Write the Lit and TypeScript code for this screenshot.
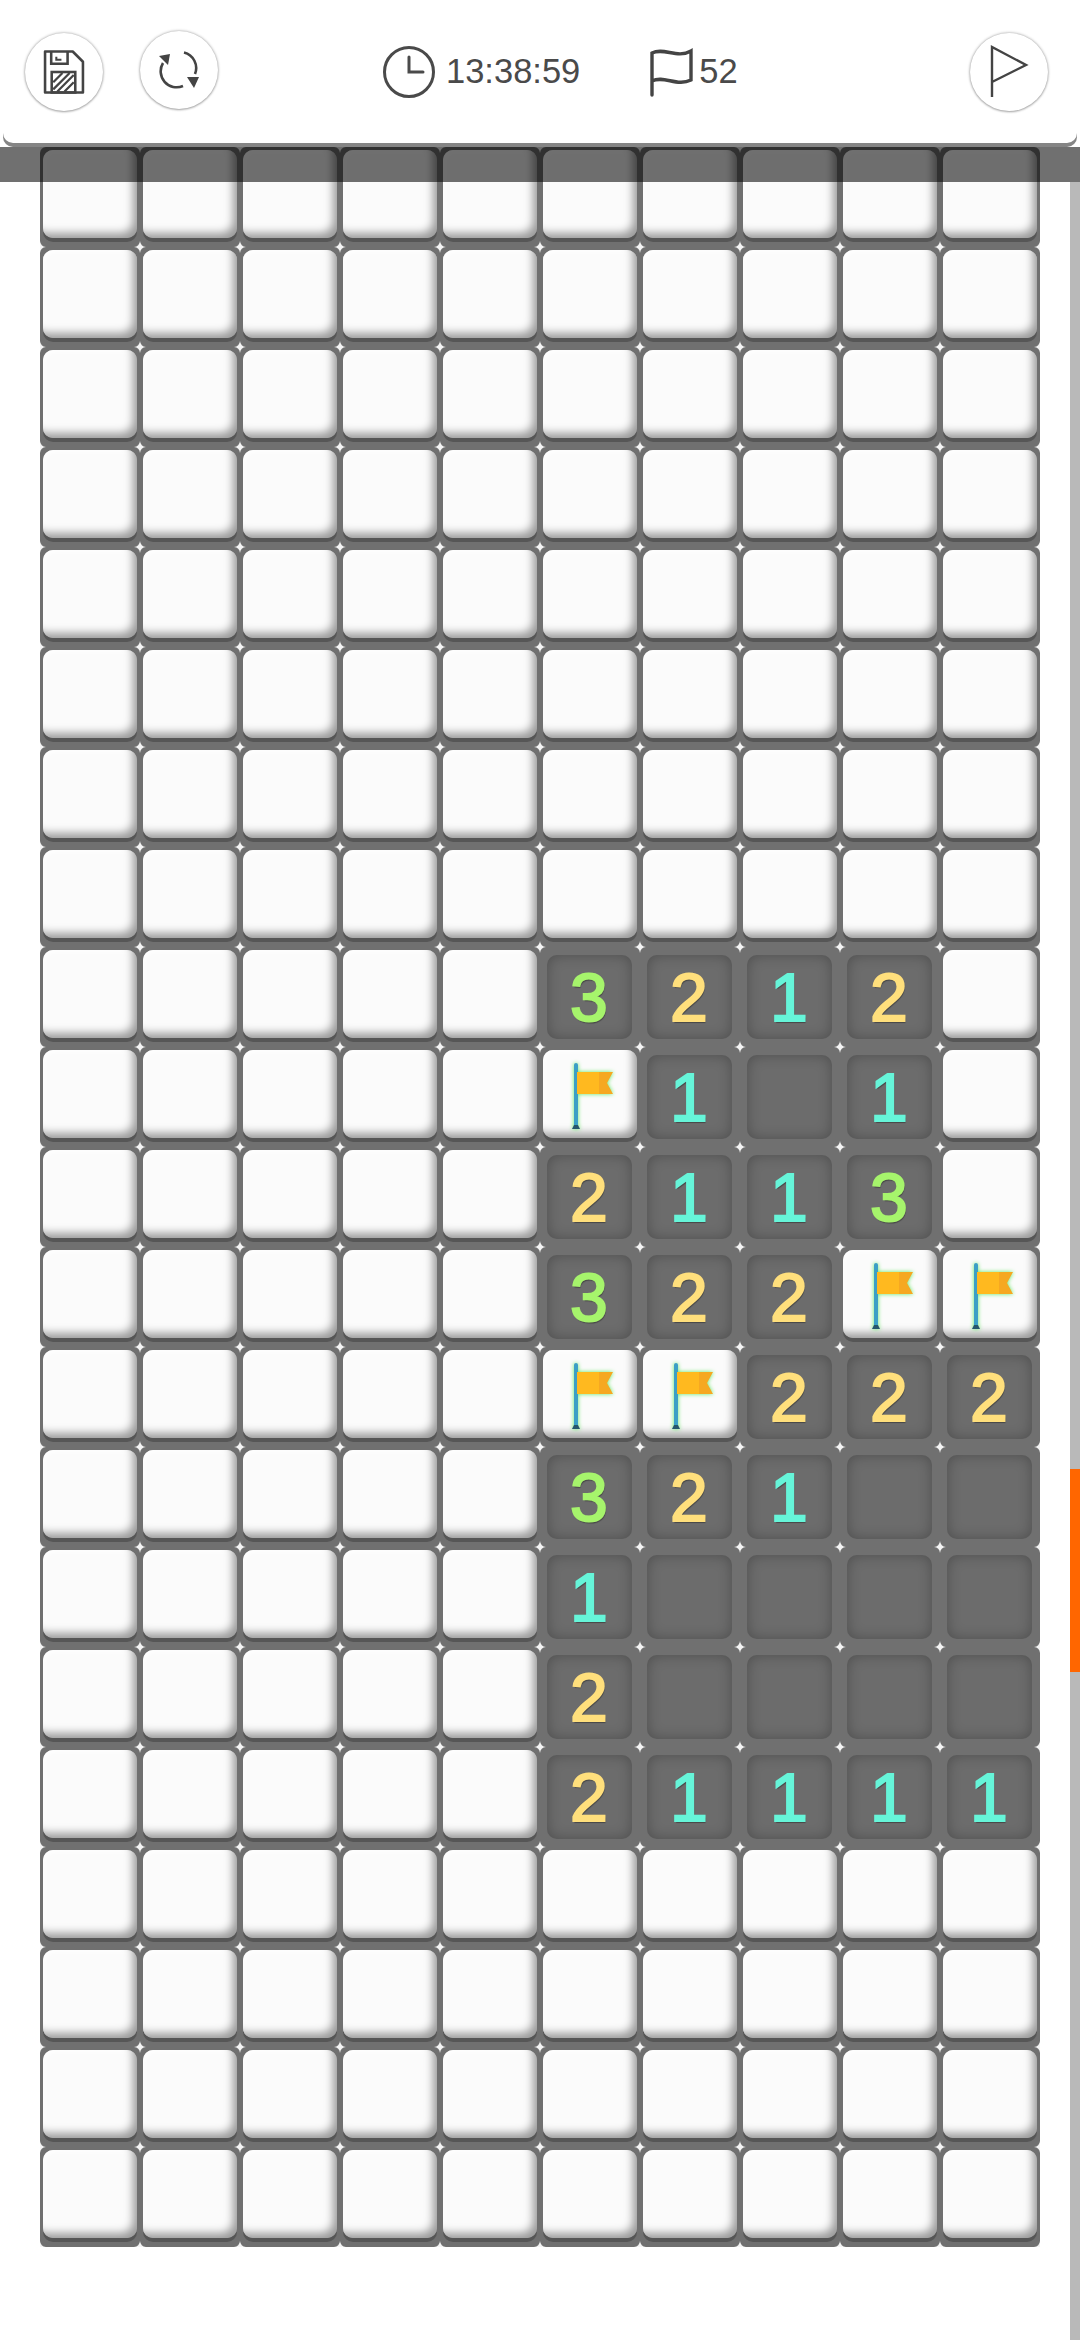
import { LitElement, css, html, svg } from 'lit';
import { customElement } from 'lit/decorators.js';

// '#' covered, 'F' flagged, '.' opened and empty, digit opened with count
const COVERED = '##########';
const BOARD = [
  ...Array(8).fill(COVERED),
  '#####3212#',
  '#####F1.1#',
  '#####2113#',
  '#####322FF',
  '#####FF222',
  '#####321..',
  '#####1....',
  '#####2....',
  '#####21111',
  ...Array(4).fill(COVERED),
];

const STAR = (x: number, y: number) =>
  `M${x} ${y - 6}Q${x + 0.6} ${y - 0.6} ${x + 6} ${y}Q${x + 0.6} ${y + 0.6} ${x} ${y + 6}Q${x - 0.6} ${y + 0.6} ${x - 6} ${y}Q${x - 0.6} ${y - 0.6} ${x} ${y - 6}Z`;
const starTile = `url("data:image/svg+xml,${encodeURIComponent(
  `<svg xmlns='http://www.w3.org/2000/svg' width='100' height='100'><path fill='#f4f4f4' d='${STAR(0, 0)}${STAR(100, 0)}${STAR(0, 100)}${STAR(100, 100)}'/></svg>`,
)}")`;

const saveIcon = svg`
  <path d="M2 1H29L39 11V41H2Z" fill="none" stroke="#444" stroke-width="2.5" stroke-linejoin="round"/>
  <path d="M8 1V13H24V1" fill="none" stroke="#444" stroke-width="2.5"/>
  <path d="M13 6V9H18" fill="none" stroke="#444" stroke-width="2"/>
  <rect x="8.5" y="21" width="23" height="20" fill="none" stroke="#444" stroke-width="2.5"/>
  <path d="M10 31L19 22M10 38L26 22M14 40L30 24M21 40L30 31" stroke="#444" stroke-width="2.2"/>
`;

const syncIcon = svg`
  <path d="M24 2.5A16 16 0 0 1 35 24" fill="none" stroke="#444" stroke-width="2.6"/>
  <path d="M23 36A16 16 0 0 1 3 13" fill="none" stroke="#444" stroke-width="2.6"/>
  <path d="M-1 6L10 4L8 15Z" fill="#444"/>
  <path d="M27 27L39 27L34 38Z" fill="#444"/>
`;

@customElement('app-root')
export class AppRoot extends LitElement {
  static override styles = css`
    :host {
      display: block;
      position: relative;
      height: 2340px;
      background: #fff;
      overflow: hidden;
      font-family: 'Liberation Sans', Arial, sans-serif;
      color: #4a4a4a;
    }

    .toolbar {
      height: 143px;
      margin: 0 3px;
      display: flex;
      align-items: center;
      background: #fff;
      border-radius: 0 0 10px 10px;
      box-shadow: 0 4px 0 #858585;
    }

    .round {
      width: 78px;
      height: 78px;
      flex: none;
      display: flex;
      align-items: center;
      justify-content: center;
      border-radius: 50%;
      background: #fff;
      box-shadow: 0 0 3px #999, 0 1px 2px #bbb;
      box-sizing: border-box;
    }

    .save {
      margin-left: 22px;
    }

    .sync {
      margin-left: 37px;
      margin-top: -3px;
    }

    .status {
      display: flex;
      align-items: center;
      font-size: 34.5px;
      letter-spacing: 0;
    }

    .clock {
      margin-left: 164px;
      gap: 10px;
    }

    .flags {
      margin-left: 69px;
      gap: 6px;
    }

    .mark {
      margin-left: auto;
      margin-right: 29px;
    }

    .scrim {
      position: absolute;
      left: 0;
      right: 0;
      top: 147px;
      height: 35px;
      background: rgba(0, 0, 0, 0.56);
    }

    .board {
      width: 1000px;
      margin: 4px 0 0 40px;
      display: grid;
      grid-template-columns: repeat(10, 100px);
      grid-auto-rows: 100px;
      background-color: #707070;
      background-image: ${css([starTile] as unknown as TemplateStringsArray)};
      background-size: 100px 100px;
    }

    .cell {
      display: flex;
      align-items: flex-start;
      justify-content: center;
    }

    .tile {
      position: relative;
      width: 94px;
      height: 88px;
      margin-top: 3px;
      border-radius: 10px;
      background: #fbfbfb;
      box-shadow:
        inset -6px -7px 9px -2px rgba(0, 0, 0, 0.38),
        inset 2px 2px 4px rgba(255, 255, 255, 0.9),
        0 4px 0 #565656;
    }

    .open {
      width: 85px;
      height: 84px;
      margin-top: 8px;
      margin-right: 2px;
      display: flex;
      align-items: center;
      justify-content: center;
      background: #6c6c6c;
      box-shadow: inset 0 0 14px rgba(0, 0, 0, 0.28);
      font-size: 68px;
      font-weight: 400;
      -webkit-text-stroke: 2px currentColor;
      text-shadow: 1px 2px 1px rgba(0, 0, 0, 0.35);
    }

    .n1 {
      color: #66f5d9;
    }

    .n2 {
      color: #ffdf7c;
    }

    .n3 {
      color: #a6f46c;
    }

    .flag {
      position: absolute;
      left: 25px;
      top: 11px;
      filter: drop-shadow(0 0 2px #5fe85f);
    }

    .scrollbar {
      position: absolute;
      right: 0;
      top: 182px;
      bottom: 0;
      width: 10px;
      background: #b9b9b9;
    }

    .thumb {
      margin-top: 1287px;
      height: 203px;
      background: #ff6600;
    }
  `;

  private renderCell(c: string) {
    if (c === '#') return html`<div class="cell"><div class="tile"></div></div>`;
    if (c === 'F') {
      return html`<div class="cell">
        <div class="tile">
          <svg class="flag" width="54" height="70" viewBox="0 0 54 70">
            <path d="M8 4V66" stroke="#3c9fc6" stroke-width="4" stroke-linecap="round"/>
            <path d="M4 68L6 64H10L12 68Z" fill="#27566b"/>
            <rect x="9" y="11" width="23" height="22" fill="#ffb91f"/>
            <path d="M31 11H45L39 22L45 33H31Z" fill="#f6a821"/>
          </svg>
        </div>
      </div>`;
    }
    const label = c === '.' ? '' : c;
    return html`<div class="cell"><div class="tile open n${c}">${label}</div></div>`;
  }

  override render() {
    return html`
      <div class="toolbar">
        <div class="round save">
          <svg width="42" height="44" viewBox="0 0 41 42">${saveIcon}</svg>
        </div>
        <div class="round sync">
          <svg width="40" height="40" viewBox="-1 0 40 40">${syncIcon}</svg>
        </div>
        <div class="status clock">
          <svg width="54" height="54" viewBox="0 0 54 54">
            <circle cx="27" cy="27" r="24.5" fill="none" stroke="#4a4a4a" stroke-width="3"/>
            <path d="M27 12V27H41" fill="none" stroke="#4a4a4a" stroke-width="3" stroke-linecap="round"/>
          </svg>
          13:38:59
        </div>
        <div class="status flags">
          <svg width="44" height="50" viewBox="0 0 44 50">
            <path d="M3 48V6C15 0 28 12 42 4V33C28 40 15 28 3 34" fill="none" stroke="#444" stroke-width="3.4" stroke-linecap="round"/>
          </svg>
          52
        </div>
        <div class="round mark">
          <svg width="40" height="54" viewBox="0 0 40 54">
            <path d="M3 52V2L37 20L3 37" fill="none" stroke="#444" stroke-width="2.4"/>
          </svg>
        </div>
      </div>
      <div class="board">
        ${BOARD.map((row) => [...row].map((c) => this.renderCell(c)))}
      </div>
      <div class="scrim"></div>
      <div class="scrollbar"><div class="thumb"></div></div>
    `;
  }
}
